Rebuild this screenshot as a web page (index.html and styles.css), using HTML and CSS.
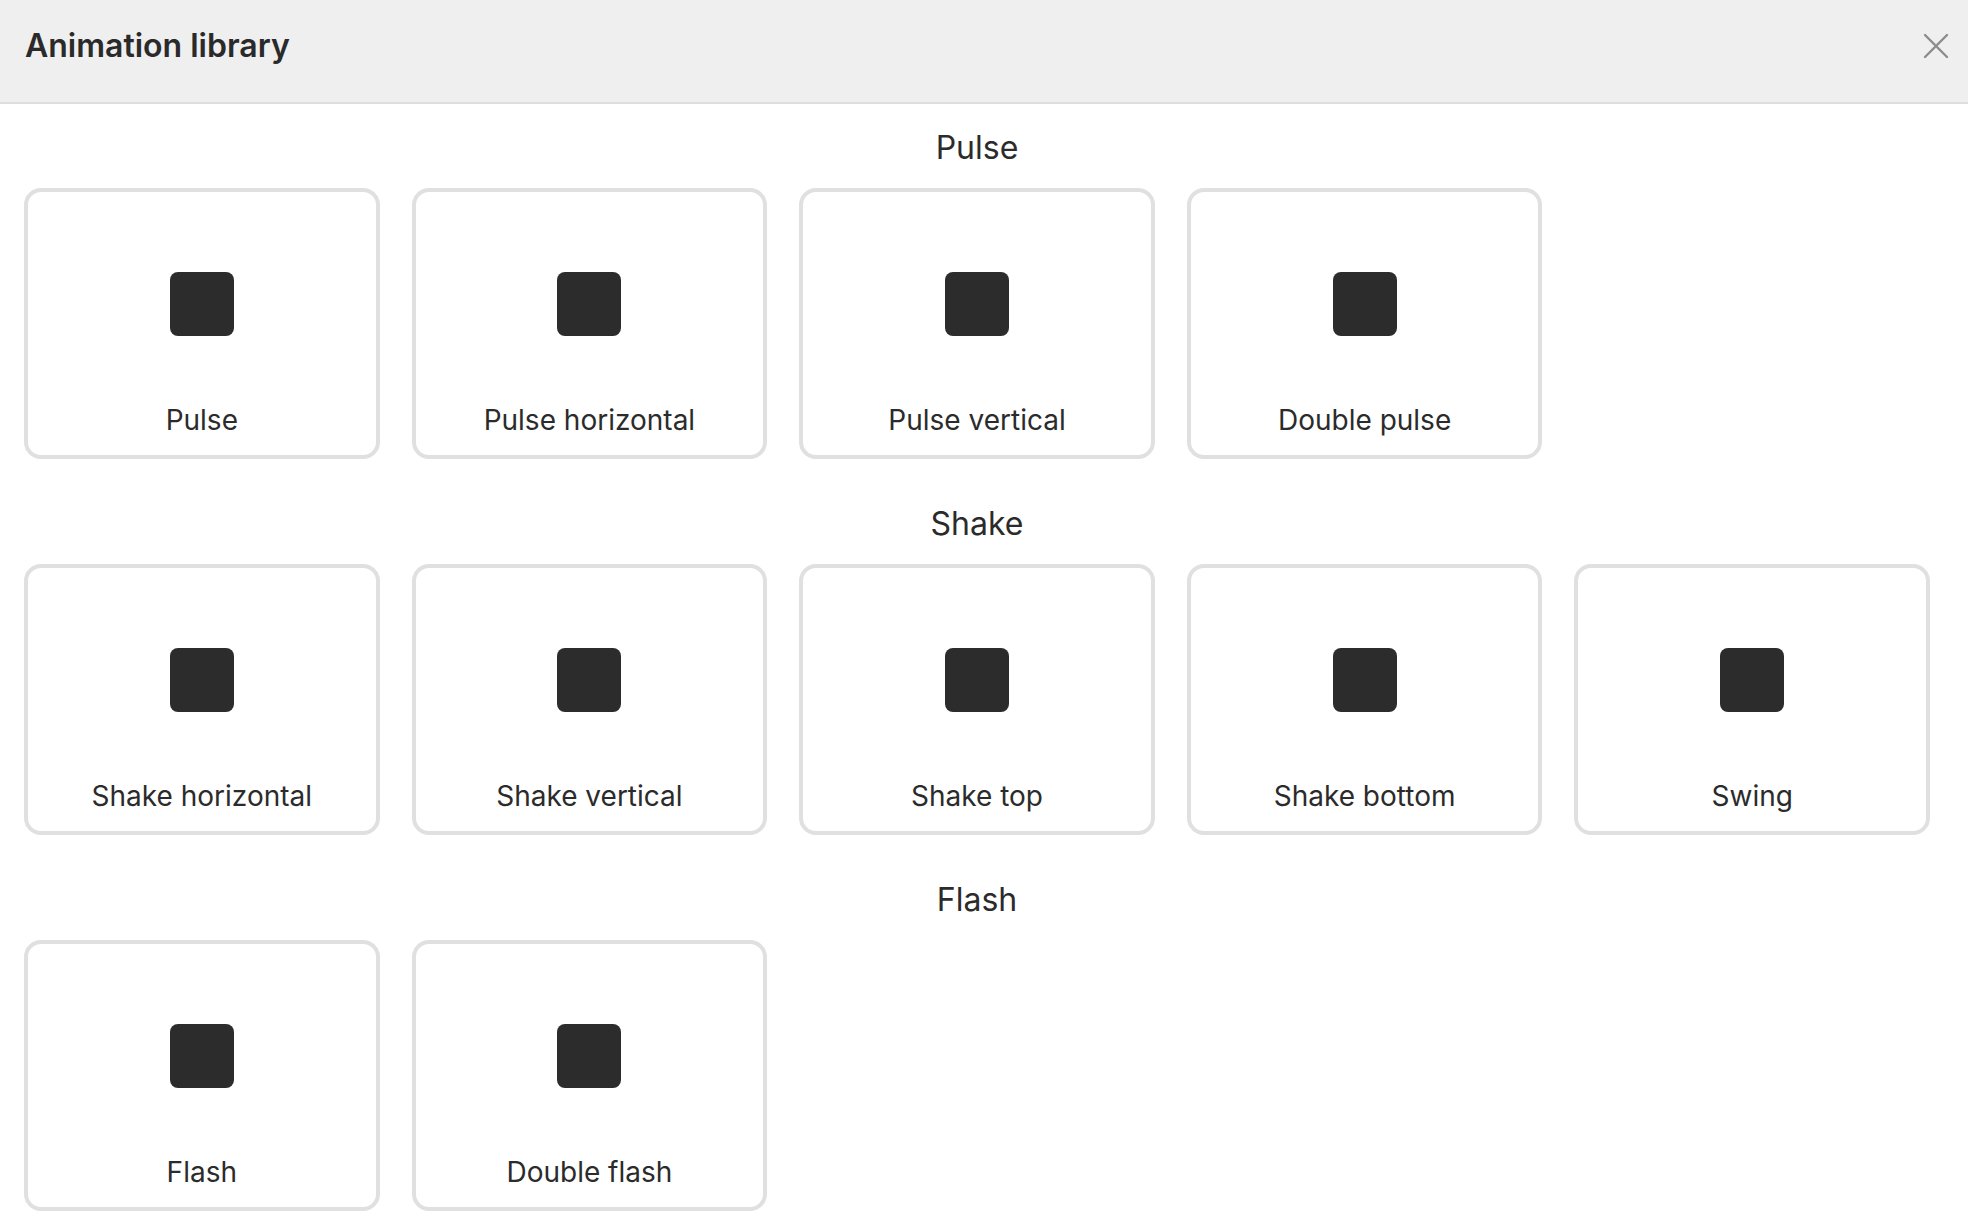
FILE: index.html
```html
<!DOCTYPE html>
<html lang="en">
<head>
    <meta charset="UTF-8">
    <meta name="viewport" content="width=device-width, initial-scale=1.0">
    <title>Animation library</title>
    <link rel="stylesheet" href="styles.css">
</head>
<body>
    <header class="dialog-header">
        <h1>Animation library</h1>
        <button class="close-button" aria-label="Close">
            <svg width="26" height="26" viewBox="0 0 26 26">
                <path d="M2 2 L24 24 M24 2 L2 24" stroke="#8c8c8c" stroke-width="2.4" stroke-linecap="round"/>
            </svg>
        </button>
    </header>

    <main class="library">
        <section class="group">
            <h2>Pulse</h2>
            <div class="card-grid">
                <div class="card"><div class="preview"></div><span class="label">Pulse</span></div>
                <div class="card"><div class="preview"></div><span class="label">Pulse horizontal</span></div>
                <div class="card"><div class="preview"></div><span class="label">Pulse vertical</span></div>
                <div class="card"><div class="preview"></div><span class="label">Double pulse</span></div>
            </div>
        </section>

        <section class="group">
            <h2>Shake</h2>
            <div class="card-grid">
                <div class="card"><div class="preview"></div><span class="label">Shake horizontal</span></div>
                <div class="card"><div class="preview"></div><span class="label">Shake vertical</span></div>
                <div class="card"><div class="preview"></div><span class="label">Shake top</span></div>
                <div class="card"><div class="preview"></div><span class="label">Shake bottom</span></div>
                <div class="card"><div class="preview"></div><span class="label">Swing</span></div>
            </div>
        </section>

        <section class="group">
            <h2>Flash</h2>
            <div class="card-grid">
                <div class="card"><div class="preview"></div><span class="label">Flash</span></div>
                <div class="card"><div class="preview"></div><span class="label">Double flash</span></div>
            </div>
        </section>
    </main>
</body>
</html>
```

FILE: styles.css
```css
body {
    margin: 0;
    font-family: Inter, "Noto Sans", sans-serif;
    color: #2b2b2b;
    background-color: #fff;
}
.dialog-header {
    box-sizing: border-box;
    height: 104px;
    display: flex;
    align-items: center;
    justify-content: space-between;
    padding: 0 19px 12px 25px;
    background-color: #efefef;
    border-bottom: 2px solid #dedede;
}
.dialog-header h1 {
    margin: 0;
    font-size: 32px;
    font-weight: 600;
    line-height: 39px;
    color: #2a2a2a;
}
.close-button {
    display: flex;
    padding: 0;
    margin-top: 2px;
    border: none;
    background: none;
    cursor: pointer;
}
.library {
    display: flex;
    flex-direction: column;
    gap: 45px;
    padding: 24px 38px 0 24px;
}
.group h2 {
    margin: 0 0 21px;
    text-align: center;
    font-size: 32px;
    font-weight: 400;
    line-height: 39px;
}
.card-grid {
    display: grid;
    grid-template-columns: repeat(5, 1fr);
    gap: 32px;
}
.card {
    display: flex;
    flex-direction: column;
    align-items: center;
    padding: 80px 0 18px;
    border: 4px solid #e0e0e0;
    border-radius: 17px;
    cursor: pointer;
}
.preview {
    width: 64px;
    height: 64px;
    border-radius: 8px;
    background-color: #2c2c2c;
}
.label {
    margin-top: 67px;
    font-size: 28px;
    line-height: 34px;
}
```
